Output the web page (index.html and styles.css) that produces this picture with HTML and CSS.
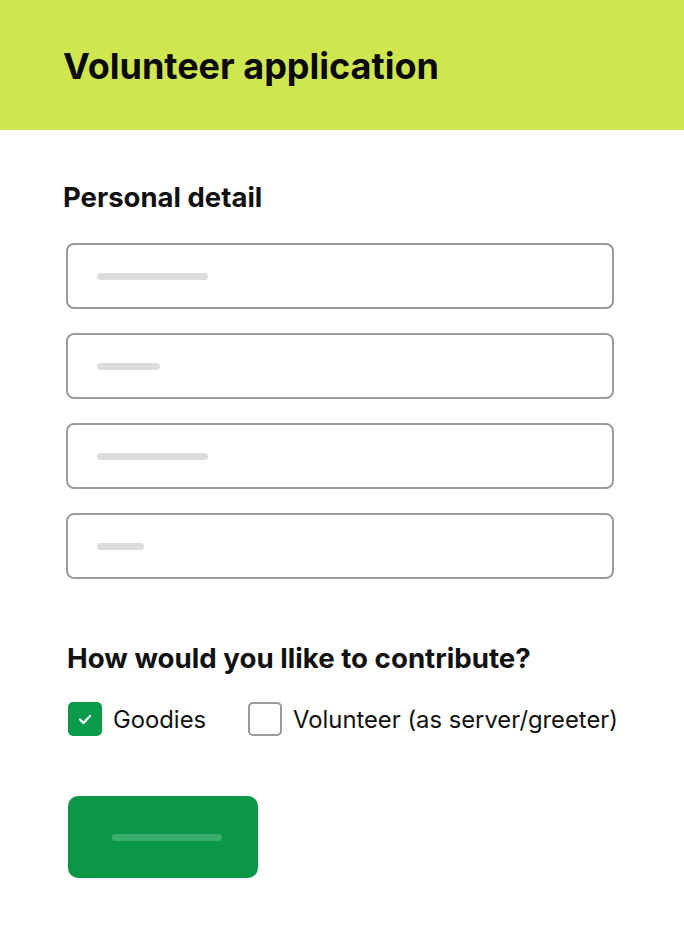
FILE: index.html
```html
<!DOCTYPE html>
<html lang="en">
<head>
    <meta charset="UTF-8">
    <meta name="viewport" content="width=device-width, initial-scale=1.0">
    <title>Volunteer application</title>
    <link rel="stylesheet" href="styles.css">
</head>
<body>

<header class="top">
    <h1>Volunteer application</h1>
</header>

<form class="form">
    <h2 class="section-title">Personal detail</h2>

    <div class="fields">
        <div class="field"><span class="ph ph-long"></span></div>
        <div class="field"><span class="ph ph-mid"></span></div>
        <div class="field"><span class="ph ph-long"></span></div>
        <div class="field"><span class="ph ph-short"></span></div>
    </div>

    <h2 class="question">How would you llike to contribute?</h2>

    <div class="options">
        <label class="option">
            <span class="box box-checked">
                <svg width="14" height="11" viewBox="0 0 14 11"><path d="M2 5.5 L5.5 9 L12 2" fill="none" stroke="#fff" stroke-width="2.2" stroke-linecap="round" stroke-linejoin="round"/></svg>
            </span>
            Goodies
        </label>
        <label class="option">
            <span class="box"></span>
            Volunteer (as server/greeter)
        </label>
    </div>

    <div class="submit"><span class="submit-bar"></span></div>
</form>

</body>
</html>
```

FILE: styles.css
```css
body {
    font-family: 'Inter', 'Liberation Sans', sans-serif;
    background-color: #fff;
    color: #111;
    margin: 0;
}
.top {
    background-color: #d0e64e;
    height: 130px;
    padding: 0 63px;
    display: flex;
    align-items: center;
    box-sizing: border-box;
}
.top h1 {
    margin: 2px 0 0;
    font-size: 36px;
    font-weight: 700;
    color: #0a0a0a;
}
.form {
    padding: 0 70px 0 66px;
}
.section-title {
    margin: 50px 0 0 -3px;
    font-size: 27.5px;
    font-weight: 700;
    line-height: 34px;
}
.fields {
    display: flex;
    flex-direction: column;
    gap: 24px;
    margin-top: 29px;
}
.field {
    height: 66px;
    border: 2px solid #9a9a9a;
    border-radius: 8px;
    box-sizing: border-box;
    display: flex;
    align-items: center;
    padding-left: 29px;
}
.ph {
    display: block;
    height: 7px;
    border-radius: 4px;
    background-color: #dcdcdc;
}
.ph-long { width: 111px; }
.ph-mid { width: 63px; }
.ph-short { width: 47px; }
.question {
    margin: 62px 0 0 1px;
    font-size: 27.7px;
    font-weight: 700;
    line-height: 34px;
}
.options {
    display: flex;
    gap: 42px;
    margin-top: 27px;
    margin-left: 2px;
}
.option {
    display: flex;
    align-items: center;
    gap: 11px;
    font-size: 23.8px;
    color: #111;
    white-space: nowrap;
}
.box {
    flex: none;
    width: 34px;
    height: 34px;
    border: 2px solid #9a9a9a;
    border-radius: 5px;
    box-sizing: border-box;
    display: flex;
    align-items: center;
    justify-content: center;
}
.box-checked {
    background-color: #0c9a4b;
    border-color: #0c9a4b;
}
.submit {
    margin: 60px 0 0 2px;
    width: 190px;
    height: 82px;
    border-radius: 10px;
    background-color: #0a9748;
    display: flex;
    align-items: center;
    padding-left: 44px;
    box-sizing: border-box;
}
.submit-bar {
    display: block;
    width: 110px;
    height: 7px;
    border-radius: 4px;
    background-color: #3cad6c;
}
```
